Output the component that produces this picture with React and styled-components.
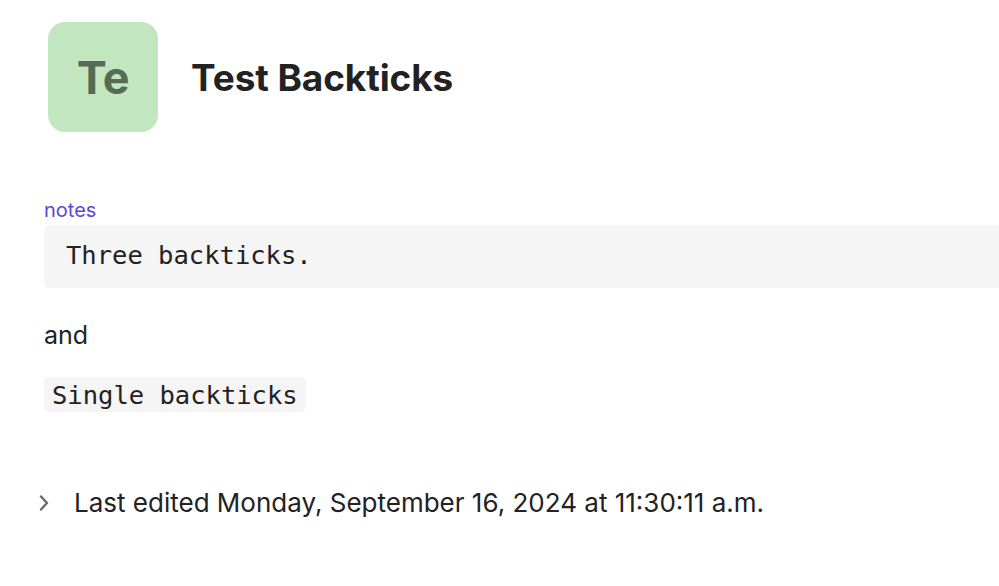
import React from "react";
import styled, { createGlobalStyle } from "styled-components";

const Global = createGlobalStyle`
  html, body { margin: 0; padding: 0; background: #ffffff; overflow: hidden; }
  body { font-family: Inter, "Noto Sans", sans-serif; color: #1f1f1f; }
`;

const Page = styled.div`
  width: 1040px;
  padding: 22px 0 0 44px;
  box-sizing: border-box;
`;

const Header = styled.div`
  display: flex;
  align-items: center;
  gap: 33px;
  padding-left: 4px;
`;

const Avatar = styled.div`
  width: 110px;
  height: 110px;
  border-radius: 17px;
  background: #c2e6c0;
  color: #566b56;
  display: flex;
  align-items: center;
  justify-content: center;
  font-size: 45px;
  font-weight: 700;
  letter-spacing: -0.5px;
`;

const Title = styled.h1`
  margin: 0;
  font-size: 37px;
  font-weight: 650;
  color: #222;
  letter-spacing: -0.1px;
`;

const Section = styled.div`
  margin-top: 66px;
  display: flex;
  flex-direction: column;
`;

const Label = styled.div`
  color: #5a48d6;
  font-size: 20px;
  line-height: 24px;
  margin-bottom: 3px;
`;

const CodeBlock = styled.pre`
  margin: 0;
  background: #f5f5f5;
  border-radius: 6px;
  padding: 0 22px 3px;
  height: 63px;
  box-sizing: border-box;
  display: flex;
  align-items: center;
  font-family: "DejaVu Sans Mono", "Liberation Mono", monospace;
  font-size: 25.5px;
  color: #222;
`;

const Paragraph = styled.p`
  margin: 31px 0 0;
  font-size: 25px;
  line-height: 32px;
  color: #222;
`;

const InlineCode = styled.code`
  display: inline-flex;
  align-items: center;
  background: #f5f5f5;
  border-radius: 5px;
  padding: 0 8px;
  height: 35px;
  font-family: "DejaVu Sans Mono", "Liberation Mono", monospace;
  font-size: 25.5px;
  color: #222;
`;

const CodeLine = styled.div`
  display: flex;
  margin-top: 26px;
`;

const Footer = styled.div`
  margin-top: 75px;
  display: flex;
  align-items: center;
  gap: 16px;
  margin-left: -14px;
  font-size: 26px;
  color: #222;
`;

const Chevron = styled.svg`
  width: 28px;
  height: 28px;
  flex: none;
`;

export default function App() {
  return (
    <>
      <Global />
      <Page>
        <Header>
          <Avatar>Te</Avatar>
          <Title>Test Backticks</Title>
        </Header>
        <Section>
          <Label>notes</Label>
          <CodeBlock>Three backticks.</CodeBlock>
          <Paragraph>and</Paragraph>
          <CodeLine>
            <InlineCode>Single backticks</InlineCode>
          </CodeLine>
        </Section>
        <Footer>
          <Chevron viewBox="0 0 28 28" fill="none" stroke="#6b6b6b" strokeWidth="2.4" strokeLinecap="round" strokeLinejoin="round">
            <path d="M11 7.5 L17 14 L11 20.5" />
          </Chevron>
          <span>Last edited Monday, September 16, 2024 at 11:30:11 a.m.</span>
        </Footer>
      </Page>
    </>
  );
}
